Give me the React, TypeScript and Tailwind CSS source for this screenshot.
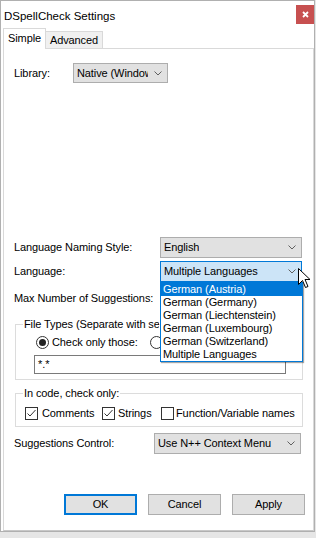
import React from "react";

const Chevron: React.FC = () => (
  <svg width="8" height="5" viewBox="0 0 8 5" className="shrink-0">
    <path d="M0.5 0.5 L4 4 L7.5 0.5" fill="none" stroke="#606060" strokeWidth="1" />
  </svg>
);

const Combo: React.FC<{ text: string; className?: string; active?: boolean; children?: React.ReactNode }> = ({
  text,
  className = "",
  active,
  children,
}) => (
  <div
    className={`relative flex items-center justify-between border pl-[3px] pr-[5px] ${
      active ? "border-[#0078d7] bg-[#cce4f7]" : "border-[#adadad] bg-[#e1e1e1]"
    } ${className}`}
  >
    <span className="overflow-hidden whitespace-nowrap">{text}</span>
    <Chevron />
    {children}
  </div>
);

const CheckBox: React.FC<{ checked?: boolean }> = ({ checked }) => (
  <div className="w-[13px] h-[13px] border border-[#333] bg-white flex items-center justify-center shrink-0">
    {checked && (
      <svg width="11" height="11" viewBox="0 0 11 11">
        <path d="M1.5 5.5 L4 8 L9.5 2" fill="none" stroke="#333" strokeWidth="1" />
      </svg>
    )}
  </div>
);

const Radio: React.FC<{ checked?: boolean }> = ({ checked }) => (
  <div className="w-[13px] h-[13px] rounded-full border border-[#333] bg-white flex items-center justify-center shrink-0">
    {checked && <div className="w-[7px] h-[7px] rounded-full bg-[#222]" />}
  </div>
);

const languages = [
  "German (Austria)",
  "German (Germany)",
  "German (Liechtenstein)",
  "German (Luxembourg)",
  "German (Switzerland)",
  "Multiple Languages",
];

export default function App() {
  return (
    <div className="w-[316px] h-[538px] bg-[#e6e6e6] text-[11px] tracking-[-0.1px] text-black font-['Liberation_Sans',Arial,sans-serif] leading-[13px]">
      <div className="w-[315px] h-[532px] bg-white border border-[#b0b0b0] flex flex-col">
        {/* Title bar */}
        <div className="h-[27px] flex justify-between shrink-0">
          <span className="pl-[3px] pt-[9px] text-[11.5px] tracking-normal">DSpellCheck Settings</span>
          <div className="mt-[4px] w-[18px] h-[19px] bg-[#c75050] flex items-center justify-center">
            <svg width="7" height="7" viewBox="0 0 7 7">
              <path d="M1 1 L6 6 M6 1 L1 6" stroke="white" strokeWidth="1.8" />
            </svg>
          </div>
        </div>

        {/* Tabs */}
        <div className="flex items-end pl-[2px] shrink-0">
          <div className="relative z-10 -mb-px w-[43px] h-[21px] bg-white border-l border-t border-r border-[#d9d9d9] flex justify-center pt-[3px]">
            Simple
          </div>
          <div className="w-[57px] h-[17px] bg-[#f0f0f0] border-t border-r border-[#d9d9d9] flex justify-center pt-[2px]">
            Advanced
          </div>
        </div>

        {/* Panel */}
        <div className="ml-[2px] flex-1 border border-[#d9d9d9] border-b-[#c8c8c8] flex flex-col pl-[10px]">
          <div className="mt-[14px] flex items-center">
            <span className="w-[59px]">Library:</span>
            <Combo text="Native (Window" className="w-[95px] h-[20px] [&>span]:w-[71px]" />
          </div>

          <div className="mt-[154px] flex items-center">
            <span className="w-[146px]">Language Naming Style:</span>
            <Combo text="English" className="w-[142px] h-[21px]" />
          </div>

          <div className="mt-[3px] flex items-center">
            <span className="w-[146px]">Language:</span>
            <Combo text="Multiple Languages" className="z-20 w-[142px] h-[21px]" active>
              <div className="absolute left-[-1px] top-[20px] w-[143px] border border-[#0078d7] bg-white shadow-[1px_1px_1px_rgba(0,0,0,0.35)]">
                {languages.map((l, i) => (
                  <div
                    key={l}
                    className={`h-[13px] pl-[2px] leading-[13px] whitespace-nowrap ${i === 0 ? "bg-[#0078d7] text-white" : ""}`}
                  >
                    {l}
                  </div>
                ))}
              </div>
              <svg className="absolute left-[137px] top-[6px]" width="13" height="21" viewBox="0 0 13 21">
                <path
                  d="M0.5 0.5 L0.5 16.5 L4.5 12.5 L7.5 19.5 L10 18.5 L7 11.5 L12 11.5 Z"
                  fill="white"
                  stroke="black"
                  strokeWidth="1"
                  strokeLinejoin="miter"
                />
              </svg>
            </Combo>
          </div>

          <div className="mt-[6px] h-[20px] flex items-center">
            <span>Max Number of Suggestions:</span>
          </div>

          {/* File types group */}
          <div className="mt-[16px] ml-[1px] w-[288px] border border-[#dcdcdc] flex flex-col pb-[5px]">
            <div className="-mt-[7px] ml-[7px] w-[136px] overflow-hidden whitespace-nowrap bg-white px-[1px]">
              File Types (Separate with se
            </div>
            <div className="mt-[4px] ml-[20px] h-[14px] flex items-center">
              <Radio checked />
              <span className="ml-[3px] w-[98px]">Check only those:</span>
              <Radio />
            </div>
            <div className="mt-[6px] ml-[18px] w-[252px] h-[19px] border border-[#7a7a7a] pl-[3px] flex items-center">
              *.*
            </div>
          </div>

          {/* In code group */}
          <div className="mt-[13px] ml-[1px] w-[288px] border border-[#dcdcdc] flex flex-col pb-[6px]">
            <div className="-mt-[7px] ml-[7px] w-fit bg-white px-[1px]">In code, check only:</div>
            <div className="mt-[7px] ml-[9px] h-[13px] flex items-center">
              <div className="w-[77px] flex items-center gap-[4px]">
                <CheckBox checked />
                <span>Comments</span>
              </div>
              <div className="w-[59px] flex items-center gap-[3px]">
                <CheckBox checked />
                <span>Strings</span>
              </div>
              <div className="flex items-center gap-[2px]">
                <CheckBox />
                <span>Function/Variable names</span>
              </div>
            </div>
          </div>

          <div className="mt-[6px] flex items-center">
            <span className="w-[140px]">Suggestions Control:</span>
            <Combo text="Use N++ Context Menu" className="w-[147px] h-[21px]" />
          </div>

          <div className="mt-[40px] ml-[50px] flex gap-[11px]">
            <div className="w-[73px] h-[21px] border-2 border-[#0078d7] bg-[#e1e1e1] flex items-center justify-center">OK</div>
            <div className="w-[73px] h-[21px] border border-[#adadad] bg-[#e1e1e1] flex items-center justify-center">Cancel</div>
            <div className="w-[73px] h-[21px] border border-[#adadad] bg-[#e1e1e1] flex items-center justify-center">Apply</div>
          </div>
        </div>
      </div>
    </div>
  );
}
